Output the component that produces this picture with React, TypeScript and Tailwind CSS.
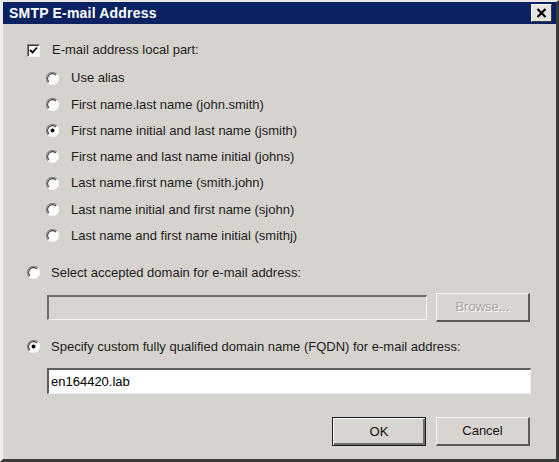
import React from "react";

const font = { fontFamily: '"Liberation Sans", Arial, sans-serif' };

const Radio = ({ checked }: { checked?: boolean }) => (
  <svg width="13" height="13" viewBox="0 0 12 12" className="shrink-0">
    <circle cx="6" cy="6" r="5.5" fill="#ffffff" />
    <path d="M10 2 A5.5 5.5 0 0 0 2 10" fill="none" stroke="#8a8884" strokeWidth="1" />
    <path d="M9.2 2.8 A4.5 4.5 0 0 0 2.8 9.2" fill="none" stroke="#3a3a3a" strokeWidth="1" />
    <path d="M2 10 A5.5 5.5 0 0 0 10 2" fill="none" stroke="#f4f3f0" strokeWidth="1" />
    {checked && <circle cx="6" cy="6" r="1.8" fill="#000000" />}
  </svg>
);

const Checkbox = () => (
  <div className="w-[13px] h-[13px] bg-white border-t border-l border-t-[#7f7d78] border-l-[#7f7d78] border-b border-r border-b-[#f4f3f0] border-r-[#f4f3f0] shadow-[inset_1px_1px_0_#3a3a3a] flex items-center justify-center shrink-0">
    <svg width="9" height="9" viewBox="0 0 9 9">
      <path d="M1 4 L3.5 6.5 L8 1.5" fill="none" stroke="#000" strokeWidth="1.8" />
    </svg>
  </div>
);

const options = [
  { label: "Use alias" },
  { label: "First name.last name (john.smith)" },
  { label: "First name initial and last name (jsmith)", checked: true },
  { label: "First name and last name initial (johns)" },
  { label: "Last name.first name (smith.john)" },
  { label: "Last name initial and first name (sjohn)" },
  { label: "Last name and first name initial (smithj)" },
];

const Button = ({
  children,
  disabled,
  isDefault,
}: {
  children: React.ReactNode;
  disabled?: boolean;
  isDefault?: boolean;
}) => (
  <div
    className={`w-[94px] h-[29px] flex items-center justify-center text-[13px] bg-[#d8d5d0] ${
      isDefault
        ? "border border-[#1a1a1a] shadow-[inset_1px_1px_0_#ffffff,inset_-2px_-2px_0_#6f6d69]"
        : "border-t border-l border-t-[#f8f7f5] border-l-[#f8f7f5] border-b-2 border-r-2 border-b-[#5a5956] border-r-[#5a5956]"
    } ${disabled ? "text-[#a5a29d] [text-shadow:1px_1px_0_#ffffff]" : "text-[#111]"}`}
  >
    {children}
  </div>
);

export default function App() {
  return (
    <div className="w-[559px] h-[462px] bg-white" style={font}>
      <div className="w-full h-full bg-[#d6d3ce] flex flex-col border-l-[3px] border-l-[#eeede9] border-r-[3px] border-r-[#3b3b3b] border-b-[3px] border-b-[#3b3b3b] border-t-2 border-t-[#e9e7e3]">
        <div className="h-[22px] bg-[#0a2261] flex items-center justify-between pl-[6px] pr-[4px]">
          <span className="text-white font-bold text-[14px] tracking-[0.2px]">SMTP E-mail Address</span>
          <div className="w-[21px] h-[18px] bg-[#e4e3e0] border-t border-l border-[#ffffff] border-b border-r border-b-[#3a3a3a] border-r-[#3a3a3a] flex items-center justify-center">
            <svg width="11" height="10" viewBox="0 0 11 10">
              <path d="M1.5 1 L9.5 9 M9.5 1 L1.5 9" stroke="#000" strokeWidth="2.2" />
            </svg>
          </div>
        </div>

        <div className="flex flex-col text-[13px] text-[#1c1c1c] pl-[24px] pr-[25px]">
          <div className="flex items-center gap-[12px] h-[20px] mt-[16px]">
            <Checkbox />
            <span>E-mail address local part:</span>
          </div>
          <div className="flex flex-col pl-[19px] mt-[8px] gap-[6.3px]">
            {options.map((o) => (
              <div key={o.label} className="flex items-center gap-[12px] h-[20px]">
                <Radio checked={o.checked} />
                <span>{o.label}</span>
              </div>
            ))}
          </div>

          <div className="flex items-center gap-[11px] h-[20px] mt-[17px]">
            <Radio />
            <span>Select accepted domain for e-mail address:</span>
          </div>
          <div className="flex items-center gap-[9px] pl-[20px] mt-[10px]">
            <div className="w-[380px] h-[25px] bg-[#d8d5d0] border-t-2 border-l-2 border-t-[#6e6c68] border-l-[#6e6c68] border-b border-r border-b-[#f6f5f2] border-r-[#f6f5f2]" />
            <Button disabled>Browse...</Button>
          </div>

          <div className="flex items-center gap-[11px] h-[20px] mt-[15px]">
            <Radio checked />
            <span>Specify custom fully qualified domain name (FQDN) for e-mail address:</span>
          </div>
          <div className="pl-[20px] mt-[11px]">
            <div className="w-[484px] h-[26px] bg-white border-t-2 border-l-2 border-t-[#5f5d59] border-l-[#5f5d59] border-b border-r border-b-[#efeeea] border-r-[#efeeea] flex items-center pl-[2px]">
              <span className="text-[13px] text-black">en164420.lab</span>
            </div>
          </div>

          <div className="flex justify-end gap-[10px] mt-[23px] pr-[1px]">
            <Button isDefault>OK</Button>
            <Button>Cancel</Button>
          </div>
        </div>
      </div>
    </div>
  );
}
